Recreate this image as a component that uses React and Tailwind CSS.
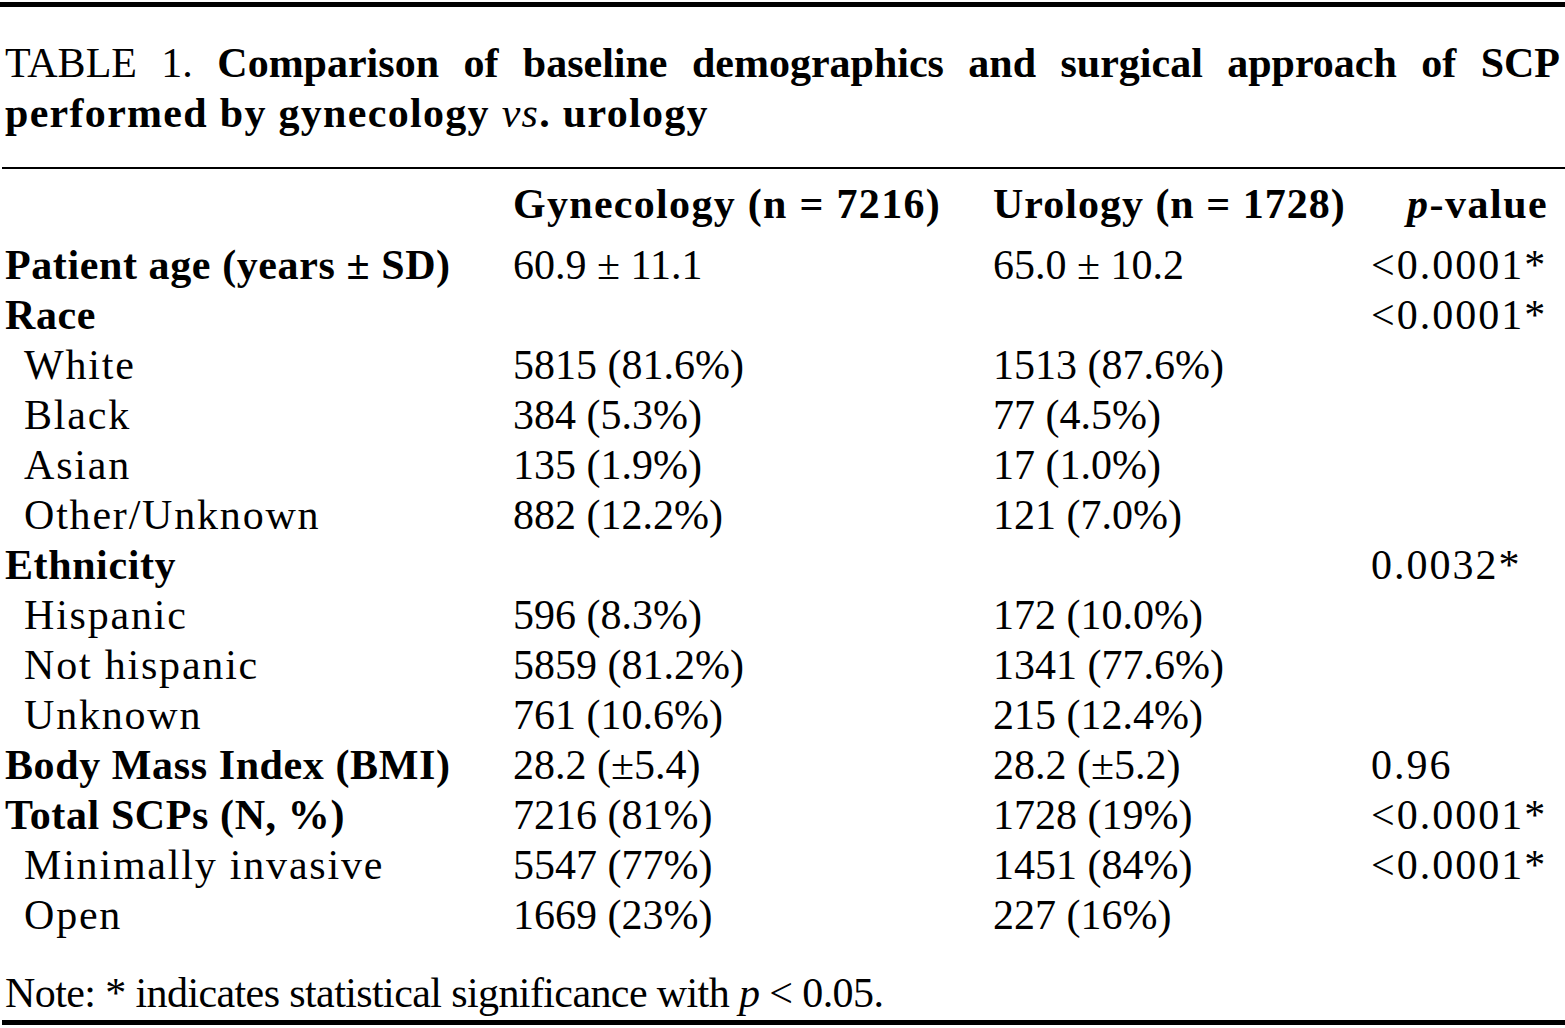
import React from "react";

const rows = [
  { label: "Patient age (years ± SD)", bold: true, g: "60.9 ± 11.1", u: "65.0 ± 10.2", p: "<0.0001*" },
  { label: "Race", bold: true, p: "<0.0001*" },
  { label: "White", g: "5815 (81.6%)", u: "1513 (87.6%)" },
  { label: "Black", g: "384 (5.3%)", u: "77 (4.5%)" },
  { label: "Asian", g: "135 (1.9%)", u: "17 (1.0%)" },
  { label: "Other/Unknown", g: "882 (12.2%)", u: "121 (7.0%)" },
  { label: "Ethnicity", bold: true, p: "0.0032*" },
  { label: "Hispanic", g: "596 (8.3%)", u: "172 (10.0%)" },
  { label: "Not hispanic", g: "5859 (81.2%)", u: "1341 (77.6%)" },
  { label: "Unknown", g: "761 (10.6%)", u: "215 (12.4%)" },
  { label: "Body Mass Index (BMI)", bold: true, g: "28.2 (±5.4)", u: "28.2 (±5.2)", p: "0.96" },
  { label: "Total SCPs (N, %)", bold: true, g: "7216 (81%)", u: "1728 (19%)", p: "<0.0001*" },
  { label: "Minimally invasive", g: "5547 (77%)", u: "1451 (84%)", p: "<0.0001*" },
  { label: "Open", g: "1669 (23%)", u: "227 (16%)" },
];

export default function App() {
  return (
    <div className="w-[1565px] h-[1028px] overflow-hidden bg-white text-black font-['Liberation_Serif',serif] text-[42px] leading-[50px]">
      <div className="pt-[2px]">
        <div className="h-[5px] bg-black" />
      </div>

      <div className="mt-[31px] pl-[5px] pr-[5px]">
        <div className="text-justify [text-align-last:justify]">
          TABLE 1. <span className="font-bold">Comparison of baseline demographics and surgical approach of SCP</span>
        </div>
        <div className="font-bold tracking-[1.3px]">
          performed by gynecology <i className="font-normal">vs</i>. urology
        </div>
      </div>

      <div className="mt-[29px] ml-[2px] h-[2px] bg-black" />

      <div className="mt-[10px] pl-[5px] grid grid-cols-[508px_480px_378px_1fr]">
        <div />
        <div className="font-bold whitespace-nowrap tracking-[1.3px]">Gynecology (n = 7216)</div>
        <div className="font-bold whitespace-nowrap tracking-[1px]">Urology (n = 1728)</div>
        <div className="font-bold whitespace-nowrap pl-[36px] tracking-[1.5px]">
          <i>p</i>-value
        </div>
      </div>

      <div className="mt-[11px] pl-[5px] grid grid-cols-[508px_480px_378px_1fr]">
        {rows.map((r, i) => (
          <React.Fragment key={i}>
            <div
              className={
                r.bold
                  ? "font-bold whitespace-nowrap tracking-[0.6px]"
                  : "pl-[19px] whitespace-nowrap tracking-[1.8px]"
              }
            >
              {r.label}
            </div>
            <div className="whitespace-nowrap">{r.g || ""}</div>
            <div className="whitespace-nowrap">{r.u || ""}</div>
            <div className="whitespace-nowrap tracking-[2px]">{r.p || ""}</div>
          </React.Fragment>
        ))}
      </div>

      <div className="mt-[28px] pl-[5px] whitespace-nowrap tracking-[-0.6px]">
        Note: * indicates statistical significance with <i>p</i> &lt; 0.05.
      </div>

      <div className="mt-[2px] ml-[2px] h-[5px] bg-black" />
    </div>
  );
}
